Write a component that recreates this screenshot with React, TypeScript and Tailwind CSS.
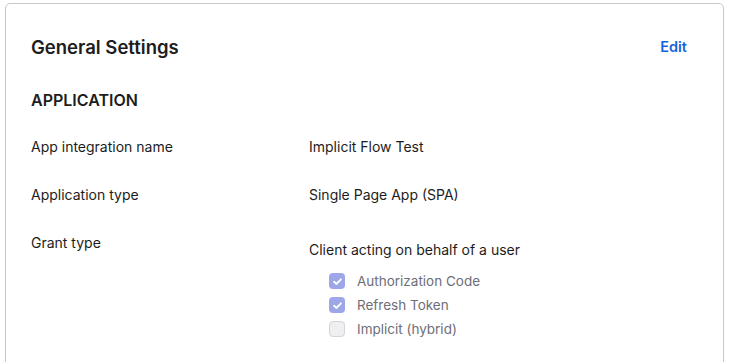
import React from 'react';

const FONT = { fontFamily: 'Inter, "Noto Sans", sans-serif' };

type Row = { label: string; value: string };

const ROWS: Row[] = [
  { label: 'App integration name', value: 'Implicit Flow Test' },
  { label: 'Application type', value: 'Single Page App (SPA)' },
];

const GRANTS = [
  { label: 'Authorization Code', checked: true },
  { label: 'Refresh Token', checked: true },
  { label: 'Implicit (hybrid)', checked: false },
];

function Check({ checked }: { checked: boolean }) {
  if (!checked) {
    return <span className="w-[16px] h-[16px] rounded-[4px] border-[1.5px] border-[#d4d4d9] bg-[#efeff1] shrink-0" />;
  }
  return (
    <span className="w-[16px] h-[16px] rounded-[4px] bg-[#9ea6ea] flex items-center justify-center shrink-0">
      <svg viewBox="0 0 12 12" className="w-[11px] h-[11px]" fill="none">
        <path d="M2.3 6.3 L4.9 8.7 L9.7 3.6" stroke="#fff" strokeWidth="2" strokeLinecap="round" strokeLinejoin="round" />
      </svg>
    </span>
  );
}

export default function App() {
  return (
    <div className="w-[730px] h-[362px] overflow-hidden bg-white pt-[3px] pl-[5px]" style={FONT}>
      <div className="w-[719px] h-[400px] border border-[#c8c8cc] rounded-[5px] px-[25px] pt-[28px]">
        <div className="flex items-center justify-between pr-[11px]">
          <h2 className="text-[18.5px] font-semibold text-[#1d1d21] leading-[30px]">General Settings</h2>
          <button className="text-[14.5px] font-semibold text-[#1662dd] leading-[30px]">Edit</button>
        </div>
        <h3 className="mt-[27px] text-[16px] font-semibold text-[#1d1d21] leading-[22px]">APPLICATION</h3>
        <div className="mt-[26px] flex flex-col gap-[28px] text-[14px] text-[#1d1d21] leading-[20px]">
          {ROWS.map((r) => (
            <div key={r.label} className="flex">
              <div className="w-[278px]">{r.label}</div>
              <div>{r.value}</div>
            </div>
          ))}
          <div className="flex">
            <div className="w-[278px]">Grant type</div>
            <div className="pt-[7px]">
              <div>Client acting on behalf of a user</div>
              <div className="mt-[11px] pl-[20px] flex flex-col gap-[4px] text-[13.5px]">
                {GRANTS.map((g) => (
                  <label key={g.label} className="flex items-center gap-[12px] text-[#6e6e78]">
                    <Check checked={g.checked} />
                    <span>{g.label}</span>
                  </label>
                ))}
              </div>
            </div>
          </div>
        </div>
      </div>
    </div>
  );
}
